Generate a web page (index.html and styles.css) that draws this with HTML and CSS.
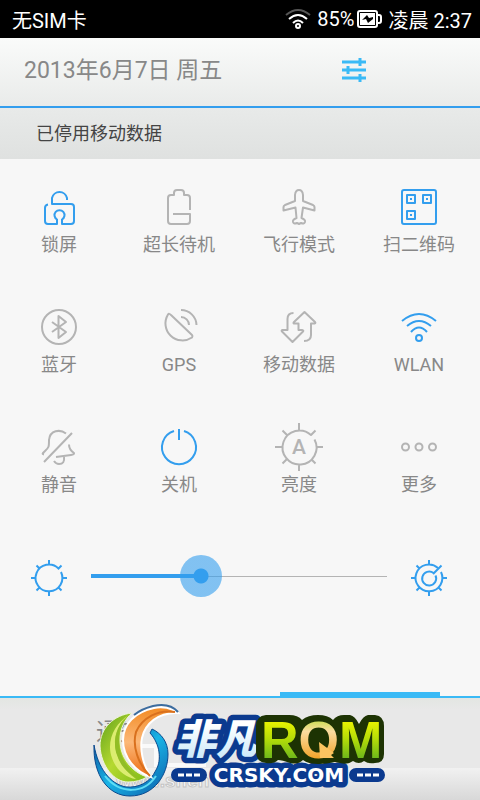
FILE: index.html
```html
<!DOCTYPE html>
<html lang="zh-CN">
<head>
    <meta charset="UTF-8">
    <meta name="viewport" content="width=device-width, initial-scale=1">
    <title>开关</title>
    <link rel="stylesheet" href="styles.css">
</head>
<body>
    <div class="statusbar">
        <span class="carrier">无SIM卡</span>
        <svg class="status-wifi" width="26" height="22" viewBox="0 0 26 22" aria-hidden="true">
            <path class="dim" d="M1 7Q13 -3 25 7"/>
            <path d="M4 11Q13 3 22 11M8 15Q13 10 18 15"/>
            <circle cx="13" cy="18" r="2"/>
        </svg>
        <span>85%</span>
        <svg class="status-battery" width="25" height="20" viewBox="0 0 25 20" aria-hidden="true">
            <rect x="1" y="2" width="19" height="16" rx="2" fill="none" stroke="#fff" stroke-width="2"/>
            <path d="M21 6h1q2 0 2 2v4q0 2-2 2h-1" fill="none" stroke="#fff" stroke-width="2"/>
            <rect x="3" y="4" width="15" height="12" fill="#fff"/>
            <path d="M5 11l5-5 2 3 4-1v2l-5 4-2-4z" fill="#000"/>
        </svg>
        <span>凌晨 2:37</span>
    </div>

    <header class="header">
        <h1>2013年6月7日 周五</h1>
        <button class="settings-btn" aria-label="设置">
            <svg width="24" height="26" viewBox="0 0 24 26">
                <path d="M0 5h24M0 13h24M0 21h24M18 1v8M6 9v8M18 17v8"/>
            </svg>
        </button>
    </header>

    <p class="notice">已停用移动数据</p>

    <main>
        <div class="tiles">
            <button class="tile on">
                <svg viewBox="0 0 48 48"><path d="M13 21.5Q10 22 10 25V38Q10 41 13 41H22V36.5A5 5 0 1 1 27 36.5V41H36Q39 41 39 38V24Q39 21 36 21H17V15A7.7 7.7 0 0 1 32 15V17"/></svg>
                <span>锁屏</span>
            </button>
            <button class="tile">
                <svg viewBox="0 0 48 48"><path d="M35 27V15Q35 12 32 12H29V10Q29 7 26 7H22Q19 7 19 10V12H16Q13 12 13 15V38Q13 41 16 41H32Q35 41 35 38V31H18"/></svg>
                <span>超长待机</span>
            </button>
            <button class="tile">
                <svg viewBox="0 0 48 48"><path d="M20 18V12Q20.5 7 24 7Q27.500 7 28 12V18L38 22Q39.5 23 39.5 24V27.5L28 24.5L26.5 35Q30.5 36.5 30 39Q29 41.5 26 40L24 41L22 40Q19 41.5 18 39Q17.5 36.5 21.5 35L20.5 24.5L8.5 27.5V24Q8.5 23 10 22Z"/></svg>
                <span>飞行模式</span>
            </button>
            <button class="tile on">
                <svg viewBox="0 0 48 48">
                    <rect x="7" y="7" width="34" height="34" rx="2"/>
                    <path d="M12 12h8v8h-8zM28 12h8v8h-8zM12 28h8v8h-8z"/>
                    <path d="M15 16h2M31 16h2M15 32h2"/>
                </svg>
                <span>扫二维码</span>
            </button>

            <button class="tile">
                <svg viewBox="0 0 48 48"><circle cx="24" cy="24" r="17"/><path d="M17 19L31 29L23.5 35V13L31 19L17 29"/></svg>
                <span>蓝牙</span>
            </button>
            <button class="tile">
                <svg viewBox="0 0 48 48"><path d="M13 11.5Q14 10 16 12L37 32Q38 33 37 34.5A17 17 0 0 1 13 11.5ZM26 7A15.5 15.5 0 0 1 41.5 22M26 14A8 8 0 0 1 34 22"/></svg>
                <span>GPS</span>
            </button>
            <button class="tile">
                <svg viewBox="0 0 48 48"><path d="M18.5 10Q12.5 10 12.5 16V27H7.5Q6 27.5 7 28.5L17.5 39L28 28.5Q29 27.5 27 27H23.5V20.5H19Q18 20 19 19L29.5 9L40 19Q41 20 39.5 20.5H36V32Q36 38 29 38"/></svg>
                <span>移动数据</span>
            </button>
            <button class="tile on">
                <svg viewBox="0 0 48 48"><path d="M7 18Q24 4 41 18M12 23Q24 13 36 23M16 29Q24 20 32 29"/><circle cx="24" cy="35" r="3"/></svg>
                <span>WLAN</span>
            </button>

            <button class="tile">
                <svg viewBox="0 0 48 48"><path d="M31 10.5C25 6 15 7 14 17C14 25 14 24 8 30Q7 31 9 31.5M37 10L9 39M34 21.5C34 26 36 28 39 30Q39.5 31.5 36 32L21 34M29 34Q30 41 24 41Q21 41 19 38"/></svg>
                <span>静音</span>
            </button>
            <button class="tile on">
                <svg viewBox="0 0 48 48"><path d="M19 8A17 17 0 1 0 29 8M24 6V17"/></svg>
                <span>关机</span>
            </button>
            <button class="tile">
                <svg viewBox="0 0 48 48">
                    <path d="M39.5 16.5A17 17 0 1 1 36 12L40.5 7.5M24 7V0M24 41V48M7 24H0M41 24H48M12 12L7.5 7.5M12 36L7.5 40.5M36 36L40.5 40.5"/>
                    <text x="24" y="31">A</text>
                </svg>
                <span>亮度</span>
            </button>
            <button class="tile">
                <svg viewBox="0 0 48 48"><circle cx="10.5" cy="24" r="3.5"/><circle cx="24" cy="24" r="3.5"/><circle cx="37.5" cy="24" r="3.5"/></svg>
                <span>更多</span>
            </button>
        </div>

        <div class="brightness">
            <svg viewBox="0 0 36 36" aria-hidden="true">
                <path d="M30 12A13.4 13.4 0 1 1 27.5 8.5L30.5 5.5M18 5V0M18 31V36M5 18H0M31 18H36M8.5 8.5L5.5 5.5M8.5 27.5L5.5 30.5M27.5 27.5L30.5 30.5"/>
            </svg>
            <input type="range" min="0" max="100" value="35" aria-label="亮度">
            <svg viewBox="0 0 36 36" aria-hidden="true">
                <path d="M30 12A13.4 13.4 0 1 1 27 8M18 5V0M18 31V36M5 18H0M31 18H36M8.5 8.5L5.5 5.5M8.5 27.5L5.5 30.5M27.5 27.5L30.5 30.5"/>
                <path d="M24.5 15.5A7 7 0 1 1 22.5 13M22 14L30.5 5.5"/>
            </svg>
        </div>
    </main>

    <footer class="footer">
        <nav class="tabs">
            <button class="tab">通知</button>
            <button class="tab active" aria-label="开关"></button>
        </nav>
        <div class="handle"></div>

        <svg class="logo" width="304" height="100" viewBox="0 0 304 100">
            <defs>
                <linearGradient id="ring" x1="0" y1="0" x2="1" y2="1">
                    <stop offset="0" stop-color="#0a3f8f"/><stop offset=".5" stop-color="#19b4e6"/><stop offset="1" stop-color="#0a5aa8"/>
                </linearGradient>
                <linearGradient id="green" x1="0" y1="0" x2="1" y2="1">
                    <stop offset="0" stop-color="#5fa01c"/><stop offset=".5" stop-color="#b5d92f"/><stop offset="1" stop-color="#7fbb1a"/>
                </linearGradient>
                <linearGradient id="orange" x1="0" y1="0" x2="0" y2="1">
                    <stop offset="0" stop-color="#f28a22"/><stop offset=".5" stop-color="#fcb878"/><stop offset="1" stop-color="#ee6c12"/>
                </linearGradient>
                <linearGradient id="white" x1="0" y1="0" x2="0" y2="1">
                    <stop offset=".3" stop-color="#fff"/><stop offset="1" stop-color="#bfe4f8"/>
                </linearGradient>
                <linearGradient id="lime" gradientUnits="userSpaceOnUse" x1="0" y1="20" x2="0" y2="58">
                    <stop offset="0" stop-color="#eef500"/><stop offset=".5" stop-color="#b4dc08"/><stop offset="1" stop-color="#6fb81a"/>
                </linearGradient>
                <linearGradient id="gold" gradientUnits="userSpaceOnUse" x1="0" y1="20" x2="0" y2="58">
                    <stop offset="0" stop-color="#c8dc50"/><stop offset=".3" stop-color="#fbdca0"/><stop offset="1" stop-color="#f2a52c"/>
                </linearGradient>
            </defs>
            <path class="mark-shape" d="M52 46H68V65H116V59"/>
            <text class="mark-text" x="28" y="87">www.shen</text>

            <path fill="url(#ring)" stroke="#0b4a8e" d="M6 45C5 75 20 96 42 96C66 96 80 75 80 54C80 42 73 33 64 29L62 33C72 44 74 60 68 70C62 83 50 88 38 87C22 84 10 68 6 45Z"/>
            <path fill="none" stroke="#5fdcf5" stroke-width="2" d="M17 76C32 95 56 94 68 76"/>
            <path fill="url(#green)" stroke="#eef5d8" d="M44 13C26 15 12 28 12 46C13 66 26 82 40 82C48 82 54 80 59 77C44 72 32 58 32 40C32 28 37 19 44 13Z"/>
            <path fill="#dced70" d="M41 15C26 24 18 42 24 58C28 70 38 78 48 79C34 69 26 54 27 40C28 29 34 20 41 15Z"/>
            <path fill="#91bd26" d="M38 17C29 26 24 42 29 55C33 68 43 76 51 78C39 68 31 56 31 40C30 30 33 23 38 17Z"/>
            <path fill="url(#orange)" stroke="#fff" stroke-width="2" d="M90 13C84 8 74 6 66 8C47 12 35 24 35 40C35 58 48 72 63 77C54 64 52 48 54 38C57 24 70 12 90 13Z"/>
            <path fill="none" stroke="#d9701d" stroke-width="2" d="M87 12C70 9 54 18 48 32C44 46 50 64 62 76"/>
            <path fill="none" stroke="#3c6d9f" stroke-width="2" d="M90 12C84 5 74 4 65 6C57 8 51 11 46 15"/>

            <text class="logo-cn" x="87" y="54">非凡</text>
            <path class="dash-back" d="M90 75h22M268 75h22"/>
            <text class="logo-url" x="191" y="82">CRSKY.COM</text>
            <path fill="#1d3303" d="M178 15H201Q210 15 214 20Q220 15 230 15Q240 15 245 20Q249 15 256 15H262Q267 16 271 24Q275 16 280 15H287Q296 16 296 26V54Q296 63 287 63Q280 64 276 61Q271 65 265 61Q260 65 252 63L247 62Q239 64 230 64Q220 64 215 60Q210 65 202 63Q194 60 190 60Q186 64 178 63Q168 62 168 52V26Q168 16 178 15Z"/>
            <text class="logo-rom" x="173" y="58">R<tspan fill="url(#gold)">O</tspan>M</text>
            <path fill="#fbc460" d="M231 42L246 53L243 55L246 58H232Z"/>
            <path class="dash" d="M90 75h22M269 75h22"/>
        </svg>
    </footer>
</body>
</html>
```
FILE: styles.css
```css
* {
    box-sizing: border-box;
}
body {
    margin: 0;
    min-height: 100vh;
    display: flex;
    flex-direction: column;
    background-color: #f7f7f7;
    color: #888;
    font-family: Roboto, "Noto Sans CJK SC", sans-serif;
}
button {
    border: none;
    background: none;
    padding: 0;
    color: inherit;
    font-family: inherit;
    cursor: pointer;
}

/* Status bar */
.statusbar {
    display: flex;
    align-items: center;
    height: 38px;
    padding: 0 8px 0 12px;
    background-color: #000;
    color: #fff;
    font-size: 20px;
}
.carrier {
    margin-right: auto;
}
.status-wifi {
    margin-right: 6px;
    fill: none;
    stroke: #fff;
    stroke-width: 2;
}
.status-wifi .dim {
    stroke: #555;
}
.status-battery {
    margin: 0 6px 0 3px;
}

/* Date header */
.header {
    display: grid;
    grid-template-columns: 1fr 1fr;
    align-items: center;
    height: 70px;
    background: linear-gradient(#fafbfa, #e9ebea);
    border-bottom: 2px solid #339eee;
}
.header h1 {
    margin: 0;
    padding: 0 0 8px 24px;
    font-size: 23px;
    font-weight: 400;
    white-space: nowrap;
}
.settings-btn {
    display: flex;
    justify-content: center;
    padding: 0 12px 4px 0;
}
.settings-btn svg {
    stroke: #3abaf6;
    stroke-width: 3;
}
.notice {
    margin: 0;
    padding: 0 36px;
    line-height: 51px;
    background: linear-gradient(#e8eae9, #dfe1e0);
    color: #444;
    font-size: 18px;
}

/* Switches */
.tiles {
    display: grid;
    grid-template-columns: repeat(4, 1fr);
    margin: 0 1px 0 -1px;
}
.tile {
    display: flex;
    flex-direction: column;
    align-items: center;
    gap: 2px;
    height: 120px;
    padding-top: 24px;
    font-size: 18px;
    line-height: 24px;
}
.tile svg {
    width: 48px;
    height: 48px;
    fill: none;
    stroke: #b4b4b4;
    stroke-width: 2;
    stroke-linejoin: round;
}
.tile.on svg {
    stroke: #339eee;
}
.tile text {
    fill: #b4b4b4;
    stroke: none;
    font-size: 21px;
    font-weight: 500;
    text-anchor: middle;
}

/* Brightness slider */
.brightness {
    display: flex;
    align-items: center;
    gap: 24px;
    padding: 36px 33px 0 31px;
}
.brightness svg {
    flex: none;
    width: 36px;
    height: 36px;
    fill: none;
    stroke: #339eee;
    stroke-width: 2;
}
.brightness input {
    flex: 1;
    min-width: 0;
    height: 42px;
    margin: 0 0 3px;
    appearance: none;
    -webkit-appearance: none;
    background:
        linear-gradient(#339eee, #339eee) left center / 37% 4px no-repeat,
        linear-gradient(#b4b4b4, #b4b4b4) left center / 100% 1px no-repeat;
}
.brightness input::-webkit-slider-thumb {
    -webkit-appearance: none;
    width: 42px;
    height: 42px;
    border-radius: 50%;
    background: radial-gradient(circle, #339eee 7px, rgba(51, 158, 238, 0.6) 8px);
}

/* Bottom tabs */
.footer {
    position: relative;
    margin-top: auto;
    border-top: 2px solid #3abaf6;
    background: linear-gradient(#e3e6e2, #e8e8e8 12px);
}
.tabs {
    display: grid;
    grid-template-columns: 1fr 1fr;
}
.tab {
    position: relative;
    height: 70px;
    padding-bottom: 8px;
    font-size: 24px;
}
.tab.active::before {
    content: "";
    position: absolute;
    top: -6px;
    left: 40px;
    right: 40px;
    height: 6px;
    background-color: #3abaf6;
}
.handle {
    height: 32px;
    background: linear-gradient(#f1f1f1, #d8d8d8);
}

/* Logo lies over the tabs */
.logo {
    position: absolute;
    left: 88px;
    bottom: 0;
    pointer-events: none;
}
.logo-cn,
.logo-url {
    stroke: #0b3a8f;
    stroke-width: 11;
    stroke-linejoin: round;
    paint-order: stroke;
}
.logo-cn {
    fill: url(#white);
    font: italic 900 41px "Noto Sans CJK SC", sans-serif;
}
.logo-url {
    fill: #fff;
    font: 700 20px "DejaVu Sans", sans-serif;
    text-anchor: middle;
}
.logo-rom {
    fill: url(#lime);
    font: 700 52px "Liberation Sans", sans-serif;
}
.dash-back {
    stroke: #0b3a8f;
    stroke-width: 14;
    stroke-linecap: round;
}
.dash {
    stroke: #fff;
    stroke-width: 3;
    stroke-dasharray: 6 2;
}
.mark-shape {
    fill: none;
    stroke: #fafafa;
    stroke-width: 4;
}
.mark-text {
    fill: #f8f8f8;
    stroke: #c4c4c4;
    stroke-width: 1;
    font: 700 19px "Liberation Sans", sans-serif;
}
```
